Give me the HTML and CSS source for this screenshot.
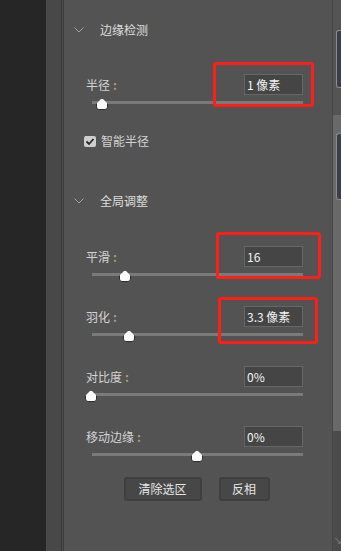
FILE: index.html
```html
<!DOCTYPE html>
<html lang="zh-CN">
<head>
<meta charset="utf-8">
<link rel="stylesheet" href="styles.css">
</head>
<body>
<div class="app">
  <div class="dock"></div>
  <div class="gutter"></div>
  <div class="panel">
    <div class="sec-head">
      <svg class="chev" width="10" height="6" viewBox="0 0 10 6"><polyline points="0.5,0.5 5,5 9.5,0.5" fill="none" stroke="#a0a0a0" stroke-width="1"/></svg>
      <span>边缘检测</span>
    </div>

    <div class="field f-first">
      <div class="field-top">
        <span class="label">半径<span class="colon">:</span></span>
        <div class="num"><span class="d">1</span> 像素</div>
      </div>
      <div class="track"><span class="thumb" style="left:4px"></span></div>
    </div>

    <div class="check-row">
      <span class="check">
        <svg width="12" height="11" viewBox="0 0 12 11"><polyline points="2.5,5.5 5,8 9.5,3" fill="none" stroke="#2a2a2a" stroke-width="1.8"/></svg>
      </span>
      <span class="label">智能半径</span>
    </div>

    <div class="sec-head sec-two">
      <svg class="chev" width="10" height="6" viewBox="0 0 10 6"><polyline points="0.5,0.5 5,5 9.5,0.5" fill="none" stroke="#a0a0a0" stroke-width="1"/></svg>
      <span>全局调整</span>
    </div>

    <div class="fields">
      <div class="field">
        <div class="field-top">
          <span class="label">平滑<span class="colon">:</span></span>
          <div class="num"><span class="d">16</span></div>
        </div>
        <div class="track"><span class="thumb" style="left:27px"></span></div>
      </div>
      <div class="field">
        <div class="field-top">
          <span class="label">羽化<span class="colon">:</span></span>
          <div class="num"><span class="d">3.3</span> 像素</div>
        </div>
        <div class="track"><span class="thumb" style="left:31px"></span></div>
      </div>
      <div class="field">
        <div class="field-top">
          <span class="label">对比度<span class="colon">:</span></span>
          <div class="num"><span class="d">0%</span></div>
        </div>
        <div class="track"><span class="thumb" style="left:-7px"></span></div>
      </div>
      <div class="field">
        <div class="field-top">
          <span class="label">移动边缘<span class="colon">:</span></span>
          <div class="num"><span class="d">0%</span></div>
        </div>
        <div class="track"><span class="thumb" style="left:99px"></span></div>
      </div>
    </div>

    <div class="buttons">
      <button class="btn btn-wide">清除选区</button>
      <button class="btn btn-narrow">反相</button>
    </div>

    <div class="mark mark-1"></div>
    <div class="mark mark-2"></div>
    <div class="mark mark-3"></div>
  </div>
  <div class="rstrip">
    <div class="rs-a"><div class="rs-btn rs-btn-1"></div></div>
    <div class="rs-b"><div class="rs-btn rs-btn-2"></div></div>
    <div class="rs-c"><span class="rs-corner">↘</span></div>
  </div>
</div>
</body>
</html>
```

FILE: styles.css
```css
* { box-sizing: border-box; }
html, body { margin: 0; padding: 0; }
body {
  width: 341px;
  height: 551px;
  overflow: hidden;
  background: #535353;
  font-family: "Noto Sans CJK SC", "Noto Sans", sans-serif;
  font-size: 12px;
  color: #d6d6d6;
}
.app {
  display: flex;
  height: 551px;
}
.dock {
  width: 46px;
  background: #262626;
}
.gutter {
  width: 16px;
  background: #484848;
  border-right: 1px solid #3a3a3a;
}
.panel {
  position: relative;
  width: 270px;
  background: #535353;
  border-left: 1px solid #4a4a4a;
  box-shadow: inset 1px 0 0 #3c3c3c;
  padding-top: 20px;
  padding-left: 1px;
}
.sec-head {
  display: flex;
  align-items: center;
  height: 20px;
  padding-left: 10px;
  gap: 16px;
  color: #dedede;
  font-size: 12px;
  line-height: 20px;
}
.chev { display: block; flex: none; }
.sec-two { margin-top: 43px; }

.field {
  padding-left: 22px;
  padding-right: 29px;
}
.f-first { margin-top: 34px; }
.field-top {
  display: flex;
  align-items: center;
  justify-content: space-between;
  height: 21px;
}
.label {
  color: #d4d4d4;
  line-height: 14px;
  white-space: nowrap;
}
.colon {
  color: #b39c7c;
  margin-left: 3px;
  font-weight: bold;
}
.num {
  width: 59px;
  height: 21px;
  background: #454545;
  border: 1px solid #666666;
  color: #f2f2f2;
  padding-left: 2px;
  line-height: 19px;
  white-space: nowrap;
}
.num .d { color: #f4f4f4; }
.track {
  position: relative;
  margin-top: 6px;
  margin-left: 6px;
  height: 3px;
  background: #7a7a7a;
}
.thumb {
  position: absolute;
  top: -3px;
  width: 12px;
  height: 12px;
  background: #fbfbfb;
  border: 1px solid #2e2e2e;
  border-radius: 2px 2px 3px 3px;
  clip-path: polygon(50% 0, 100% 50%, 100% 100%, 0 100%, 0 50%);
}

.check-row {
  display: flex;
  align-items: center;
  gap: 5px;
  height: 14px;
  margin-top: 30px;
  padding-left: 20px;
}
.check {
  width: 12px;
  height: 11px;
  background: #cfcfcf;
  border-radius: 2px;
  display: flex;
}
.check svg { display: block; }

.fields {
  display: flex;
  flex-direction: column;
  gap: 30px;
  margin-top: 35px;
}

.buttons {
  display: flex;
  justify-content: center;
  gap: 17px;
  margin-top: 21px;
  padding-right: 3px;
}
.btn {
  height: 24px;
  background: #474747;
  border: 2px solid #3f3f3f;
  border-radius: 3px;
  color: #e6e6e6;
  font-family: "Noto Sans CJK SC", "Noto Sans", sans-serif;
  font-size: 12px;
  padding: 0;
  line-height: 20px;
}
.btn-wide { width: 78px; }
.btn-narrow { width: 51px; }

.mark {
  position: absolute;
  border: 3px solid #ff1f1a;
  border-radius: 3px;
}
.mark-1 { left: 150px; top: 62px; width: 101px; height: 45px; }
.mark-2 { left: 153px; top: 232px; width: 105px; height: 47px; }
.mark-3 { left: 155px; top: 297px; width: 100px; height: 47px; }

.rstrip {
  width: 9px;
  display: flex;
  flex-direction: column;
  background: #4b4b4b;
  border-left: 1px solid #474747;
}
.rs-a {
  height: 115px;
  background: #545454;
  padding-top: 30px;
  padding-left: 3px;
}
.rs-b {
  height: 316px;
  background: #696969;
  padding-top: 18px;
  padding-left: 3px;
}
.rs-c {
  flex: 1;
  background: #4b4b4b;
  position: relative;
}
.rs-btn {
  background: #3b3e45;
  border: 1px solid #878c96;
  border-right: none;
  border-radius: 3px 0 0 3px;
}
.rs-btn-1 { height: 58px; }
.rs-btn-2 { height: 67px; }
.rs-corner {
  position: absolute;
  left: 1px;
  bottom: 6px;
  font-size: 8px;
  color: #8a8a8a;
  line-height: 8px;
}
```
